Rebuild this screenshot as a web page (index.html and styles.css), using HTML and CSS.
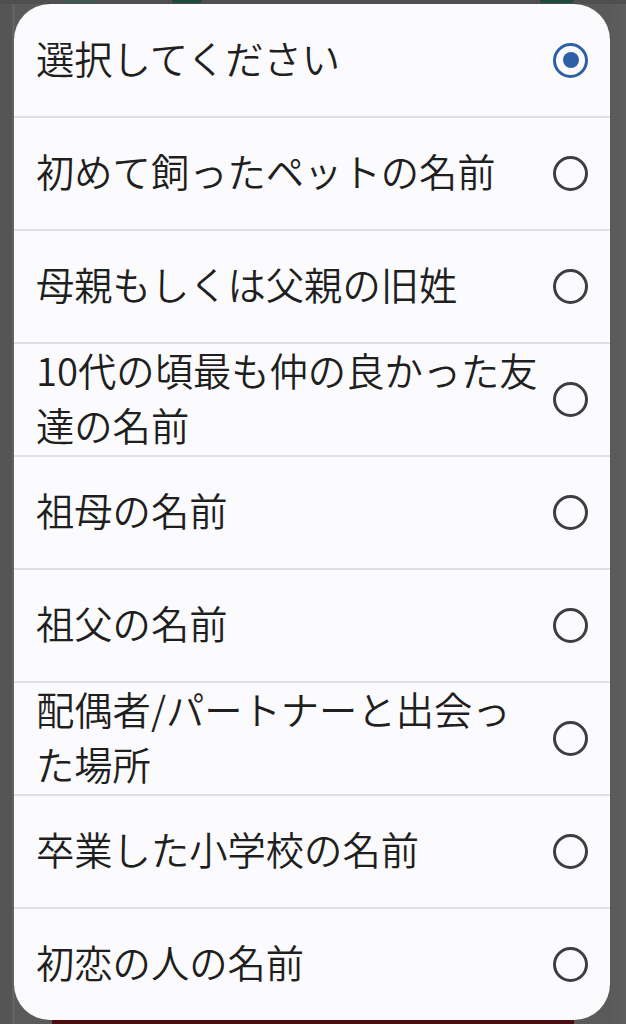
FILE: index.html
```html
<!DOCTYPE html>
<html lang="ja">
<head>
<meta charset="utf-8">
<link rel="stylesheet" href="styles.css">
</head>
<body>
<div class="backdrop">
  <div class="behind-top">
    <span class="blob b1"></span><span class="blob b2"></span><span class="blob b3"></span>
  </div>
  <div class="dialog">
    <div class="row"><span class="label">選択してください</span><span class="radio checked"></span></div>
    <div class="row"><span class="label">初めて飼ったペットの名前</span><span class="radio"></span></div>
    <div class="row"><span class="label">母親もしくは父親の旧姓</span><span class="radio"></span></div>
    <div class="row"><span class="label">10代の頃最も仲の良かった友達の名前</span><span class="radio"></span></div>
    <div class="row"><span class="label">祖母の名前</span><span class="radio"></span></div>
    <div class="row"><span class="label">祖父の名前</span><span class="radio"></span></div>
    <div class="row"><span class="label">配偶者/パートナーと出会った場所</span><span class="radio"></span></div>
    <div class="row"><span class="label">卒業した小学校の名前</span><span class="radio"></span></div>
    <div class="row"><span class="label">初恋の人の名前</span><span class="radio"></span></div>
  </div>
  <div class="behind-bottom"></div>
</div>
</body>
</html>
```
FILE: styles.css
```css
html, body {
  margin: 0;
  padding: 0;
}
body {
  background: #585858;
  width: 626px;
  height: 1024px;
  overflow: hidden;
  font-family: "Noto Sans CJK JP", "Noto Sans", sans-serif;
}
.backdrop {
  position: relative;
  width: 626px;
  height: 1024px;
  padding: 4px 16px 0 14px;
  box-sizing: border-box;
  background: linear-gradient(to right, #555 0, #555 12px, #6a6a6a 13px, #5a5a5a 15px, #5a5a5a 610px, #5e5e5e 626px);
}
.behind-top {
  position: absolute;
  left: 0;
  top: 0;
  width: 626px;
  height: 4px;
  background: #4f4f4f;
}
.blob {
  position: absolute;
  top: 0;
  height: 3px;
  background: #1d4a3a;
  border-radius: 0 0 8px 8px;
}
.b1 { left: 62px; width: 36px; background: #3d5a50; }
.b2 { left: 172px; width: 30px; }
.b3 { left: 540px; width: 34px; }
.dialog {
  position: relative;
  z-index: 1;
  width: 596px;
  height: 1016px;
  background: #fbfbfd;
  border-radius: 36px;
  overflow: hidden;
  display: flex;
  flex-direction: column;
}
.row {
  display: flex;
  align-items: center;
  justify-content: space-between;
  height: 113px;
  flex: none;
  box-sizing: border-box;
  padding: 0 22px 6px 22px;
  border-top: 2px solid #e0e0e2;
  gap: 10px;
}
.row:first-child {
  height: 112px;
  border-top: none;
}
.label {
  font-size: 38.3px;
  font-weight: 350;
  line-height: 55px;
  color: #1f1f1f;
  flex: 1;
  max-width: 512px;
  letter-spacing: 0;
}
.radio {
  flex: none;
  width: 35px;
  height: 35px;
  margin-top: 6px;
  box-sizing: border-box;
  border: 3.6px solid #3e3e40;
  border-radius: 50%;
  position: relative;
}
.radio.checked {
  border-color: #2f5fa6;
}
.radio.checked::after {
  content: "";
  position: absolute;
  left: 50%;
  top: 50%;
  width: 16px;
  height: 16px;
  margin: -8px 0 0 -8px;
  border-radius: 50%;
  background: #2f5fa6;
}
.behind-bottom {
  position: absolute;
  left: 52px;
  top: 1019px;
  width: 522px;
  height: 5px;
  background: #4a0e10;
}
```
